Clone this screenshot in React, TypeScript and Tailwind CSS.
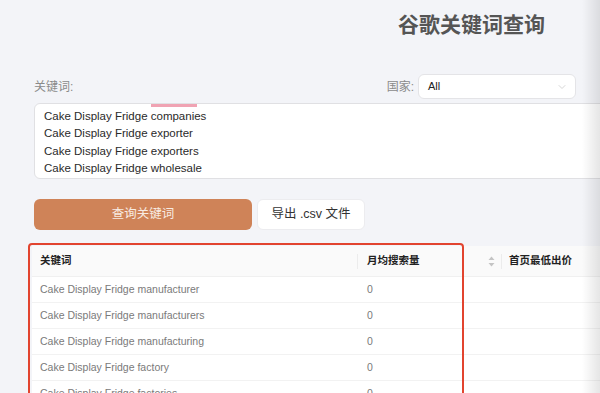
import { ChevronDown } from "lucide-react";

const FONT = "font-['Liberation_Sans','Noto_Sans_CJK_SC',sans-serif]";

const TEXT_LINES = [
  "Cake Display Fridge companies",
  "Cake Display Fridge exporter",
  "Cake Display Fridge exporters",
  "Cake Display Fridge wholesale",
];

const ROWS = [
  { keyword: "Cake Display Fridge manufacturer", volume: "0" },
  { keyword: "Cake Display Fridge manufacturers", volume: "0" },
  { keyword: "Cake Display Fridge manufacturing", volume: "0" },
  { keyword: "Cake Display Fridge factory", volume: "0" },
  { keyword: "Cake Display Fridge factories", volume: "0" },
];

function SortIcon() {
  return (
    <svg width="7" height="11" viewBox="0 0 7 11" className="text-[#c4c4c4]">
      <path d="M3.5 0.5 L6.5 4 L0.5 4 Z" fill="currentColor" />
      <path d="M3.5 10.5 L6.5 7 L0.5 7 Z" fill="currentColor" />
    </svg>
  );
}

export default function App() {
  return (
    <div className={`relative w-[600px] h-[393px] overflow-hidden bg-[#f3f4f8] ${FONT}`}>
      <div className="pl-[34px]">
        {/* Title */}
        <h1 className="pt-[10px] pl-[364px] h-[40px] text-[21px] leading-[30px] font-semibold text-[#555] whitespace-nowrap">
          谷歌关键词查询
        </h1>

        {/* Label row */}
        <div className="mt-[34px] pr-[24px] flex items-center h-[25px]">
          <span className="text-[12px] text-[#8a8a8a]">关键词:</span>
          <div className="flex-1" />
          <span className="text-[12px] text-[#8a8a8a] mr-[4px]">国家:</span>
          <div className="w-[158px] h-[25px] rounded-md border border-[#e4e4e7] bg-white flex items-center justify-between pl-[9px] pr-[7px]">
            <span className="text-[11px] text-[#222]">All</span>
            <ChevronDown className="w-[12px] h-[12px] text-[#c8c8c8]" strokeWidth={1.5} />
          </div>
        </div>

        {/* Textarea */}
        <div className="mt-[4px] w-[600px] h-[76px] rounded-md border border-[#e0e0e3] bg-white overflow-hidden pl-[9px]">
          <div className="-mt-[14px] text-[11.5px] leading-[17.5px] text-[#2a2a2a] whitespace-nowrap">
            <div>
              Cake Display Fridge{" "}
              <span className="border-b-[3px] border-[#f0a3b3]">company</span>
            </div>
            {TEXT_LINES.map((line) => (
              <div key={line}>{line}</div>
            ))}
          </div>
        </div>

        {/* Buttons */}
        <div className="mt-[20px] flex gap-[5px]">
          <button className="w-[218px] h-[31px] rounded-md bg-[#cf8358] text-[12.5px] text-[#f8ebe2]">
            查询关键词
          </button>
          <button className="w-[108px] h-[31px] rounded-md bg-white border border-[#ececef] text-[12.5px] text-[#333]">
            导出 .csv 文件
          </button>
        </div>

        {/* Table */}
        <div className="mt-[16px] -ml-[2px] w-[600px] bg-white">
          <div className="flex h-[31px] items-center bg-[#fafafa] border-b border-[#f0f0f0] text-[10.5px] font-semibold text-[#222]">
            <div className="w-[326px] pl-[8px] relative h-full flex items-center">
              关键词
              <span className="absolute right-0 top-[8px] h-[15px] w-px bg-[#ececec]" />
            </div>
            <div className="w-[144px] pl-[9px] pr-[7px] relative h-full flex items-center justify-between">
              <span>月均搜索量</span>
              <SortIcon />
              <span className="absolute right-0 top-[8px] h-[15px] w-px bg-[#ececec]" />
            </div>
            <div className="pl-[7px]">首页最低出价</div>
          </div>
          {ROWS.map((row) => (
            <div
              key={row.keyword}
              className="flex h-[26px] items-center border-b border-[#f2f2f2] text-[10.5px] text-[#7a7a7a]"
            >
              <div className="w-[326px] pl-[8px] whitespace-nowrap">{row.keyword}</div>
              <div className="w-[144px] pl-[9px]">{row.volume}</div>
              <div className="flex-1" />
            </div>
          ))}
        </div>
      </div>

      {/* Red annotation box */}
      <div className="absolute left-[28px] top-[243px] w-[436px] h-[170px] border-2 border-[#e2442f] rounded-t-[4px] pointer-events-none" />

      {/* Right edge shadow */}
      <div className="absolute right-0 top-0 w-[18px] h-full bg-gradient-to-r from-transparent to-black/10 pointer-events-none" />
    </div>
  );
}
